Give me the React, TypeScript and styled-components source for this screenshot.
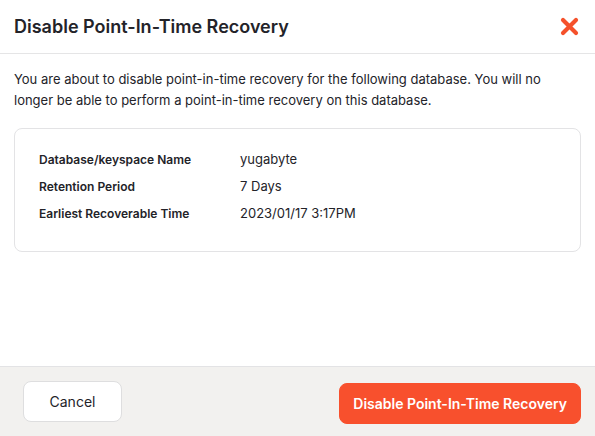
import React from "react";
import styled, { createGlobalStyle } from "styled-components";

const Global = createGlobalStyle`
  html, body { margin: 0; padding: 0; background: #fff; }
  body { font-family: Inter, "Noto Sans", sans-serif; color: #232329; }
  * { box-sizing: border-box; }
`;

const Dialog = styled.div`
  width: 595px;
  height: 436px;
  display: flex;
  flex-direction: column;
  background: #fff;
`;

const Header = styled.div`
  height: 54px;
  flex: none;
  display: flex;
  align-items: center;
  justify-content: space-between;
  padding: 0 16px 0 14px;
  border-bottom: 1px solid #e5e5e6;
`;

const Title = styled.h2`
  margin: 0;
  font-size: 18px;
  font-weight: 600;
  color: #232329;
`;

const CloseButton = styled.button`
  border: 0;
  background: none;
  padding: 0;
  width: 20px;
  height: 20px;
  display: flex;
  align-items: center;
  justify-content: center;
  cursor: pointer;
`;

const Body = styled.div`
  flex: 1;
  padding: 15px 14px 0 14px;
`;

const Intro = styled.p`
  margin: 0 0 17px 0;
  font-size: 13px;
  line-height: 21px;
  color: #232329;
`;

const Card = styled.div`
  border: 1px solid #e3e3e5;
  border-radius: 8px;
  padding: 22px 24px 29px 24px;
  display: grid;
  grid-template-columns: 201px 1fr;
  row-gap: 10px;
`;

const Label = styled.div`
  font-size: 12px;
  font-weight: 600;
  line-height: 17px;
  color: #232329;
`;

const Value = styled.div`
  font-size: 13px;
  line-height: 17px;
  color: #232329;
`;

const Footer = styled.div`
  height: 70px;
  flex: none;
  background: #f2f1ef;
  border-top: 1px solid #e3e3e5;
  display: flex;
  align-items: center;
  justify-content: space-between;
  padding: 0 14px 0 23px;
`;

const Button = styled.button<{ $primary?: boolean }>`
  font-family: Inter, "Noto Sans", sans-serif;
  font-size: 14px;
  font-weight: ${(p) => (p.$primary ? 600 : 400)};
  height: 41px;
  border-radius: 8px;
  cursor: pointer;
  border: 1px solid ${(p) => (p.$primary ? "#f8502d" : "#dededf")};
  background: ${(p) => (p.$primary ? "#f8502d" : "#fff")};
  color: ${(p) => (p.$primary ? "#fff" : "#232329")};
  padding: 0 ${(p) => (p.$primary ? "13px" : "0")};
  width: ${(p) => (p.$primary ? "auto" : "99px")};
  margin-top: ${(p) => (p.$primary ? "3px" : "-1px")};
`;

const rows: [string, string][] = [
  ["Database/keyspace Name", "yugabyte"],
  ["Retention Period", "7 Days"],
  ["Earliest Recoverable Time", "2023/01/17 3:17PM"],
];

export default function App() {
  return (
    <>
      <Global />
      <Dialog>
        <Header>
          <Title>Disable Point-In-Time Recovery</Title>
          <CloseButton aria-label="Close">
            <svg width="19" height="19" viewBox="0 0 19 19">
              <path
                d="M3 3 L16 16 M16 3 L3 16"
                stroke="#f5512b"
                strokeWidth="4.2"
                strokeLinecap="round"
              />
            </svg>
          </CloseButton>
        </Header>
        <Body>
          <Intro>
            You are about to disable point-in-time recovery for the following database. You will no
            longer be able to perform a point-in-time recovery on this database.
          </Intro>
          <Card>
            {rows.map(([k, v]) => (
              <React.Fragment key={k}>
                <Label>{k}</Label>
                <Value>{v}</Value>
              </React.Fragment>
            ))}
          </Card>
        </Body>
        <Footer>
          <Button>Cancel</Button>
          <Button $primary>Disable Point-In-Time Recovery</Button>
        </Footer>
      </Dialog>
    </>
  );
}
